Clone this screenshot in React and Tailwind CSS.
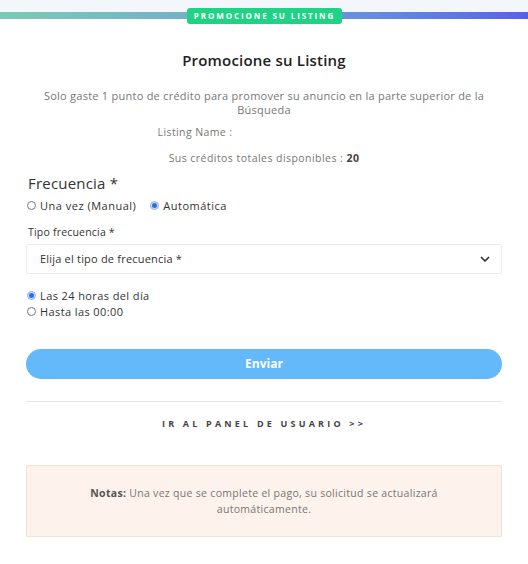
import React, { useState } from 'react';

const Radio = ({ checked, label, onClick }) => (
    <label onClick={onClick} className="flex items-center gap-[4px] cursor-pointer">
        <span className={`w-[9px] h-[9px] rounded-full flex items-center justify-center ${checked ? 'bg-[#c9defc] border border-[#8fb4f4]' : 'border border-[#777]'}`}>
            {checked && <span className="w-[5px] h-[5px] rounded-full bg-[#2f6fe6]" />}
        </span>
        <span>{label}</span>
    </label>
);

const App = () => {
    const [mode, setMode] = useState('auto');
    const [hours, setHours] = useState('24');

    return (
        <div className="w-[528px] min-h-[564px] bg-white text-[#333]" style={{ fontFamily: '"Open Sans", "Liberation Sans", sans-serif' }}>
            {/* cabecera */}
            <div className="relative h-[28px]">
                <div className="h-[12px] bg-[#f3f6fb]" />
                <div className="h-[7px] bg-gradient-to-r from-[#7acbb3] via-[#72a6d0] to-[#5a5ef0]" />
                <div className="absolute left-[187px] top-[8px] w-[155px] h-[16px] rounded-[3px] bg-[#1fd286] flex items-center justify-center text-white text-[8px] font-bold tracking-[1.9px]">
                    PROMOCIONE SU LISTING
                </div>
            </div>

            <div className="px-[26px]">
                <h1 className="mt-[21px] text-center text-[15px] font-semibold tracking-[0.2px] text-[#222]">Promocione su Listing</h1>
                <p className="mt-[17px] mx-auto max-w-[460px] text-center text-[11px] leading-[14px] tracking-[0.25px] text-[#777]">
                    Solo gaste 1 punto de crédito para promover su anuncio en la parte superior de la Búsqueda
                </p>
                <div className="mt-[8px] flex justify-center text-[10.5px] tracking-[0.4px] text-[#777]">
                    <span>Listing Name :</span>
                    <span className="w-[138px]" />
                </div>
                <p className="mt-[11px] text-center text-[10.5px] tracking-[0.45px] text-[#777]">
                    Sus créditos totales disponibles : <b className="text-[#444]">20</b>
                </p>

                <div className="mt-[5px] pl-[2px] text-[15px] tracking-[0.2px] text-[#333]">Frecuencia *</div>
                <div className="mt-[3px] pl-[1px] flex items-center gap-[14px] text-[11px] tracking-[0.5px] text-[#333]">
                    <Radio checked={mode === 'manual'} label="Una vez (Manual)" onClick={() => setMode('manual')} />
                    <Radio checked={mode === 'auto'} label="Automática" onClick={() => setMode('auto')} />
                </div>

                <div className="mt-[11px] pl-[2px] text-[10.5px] tracking-[0.2px] text-[#333]">Tipo frecuencia *</div>
                <div className="mt-[3px] h-[30px] border border-[#ececec] rounded-[2px] flex items-center text-[11px] tracking-[0.2px] text-[#333]">
                    <span className="flex-1 pl-[13px]">Elija el tipo de frecuencia *</span>
                    <svg className="mr-[10px]" width="12" height="12" viewBox="0 0 24 24" fill="none" stroke="#333" strokeWidth="3.5" strokeLinecap="round" strokeLinejoin="round">
                        <path d="M5 9l7 7 7-7" />
                    </svg>
                </div>

                <div className="mt-[14px] pl-[1px] flex flex-col leading-[16px] text-[11px] tracking-[0.4px] text-[#333]">
                    <Radio checked={hours === '24'} label="Las 24 horas del día" onClick={() => setHours('24')} />
                    <Radio checked={hours === '00'} label="Hasta las 00:00" onClick={() => setHours('00')} />
                </div>

                <button className="mt-[29px] w-full h-[30px] rounded-full bg-[#64b9fb] text-white text-[12px] font-bold">
                    Enviar
                </button>

                <div className="mt-[22px] border-t border-[#e5e5e5]" />

                <div className="mt-[15px] text-center text-[9px] font-bold tracking-[3.2px] text-[#444]">
                    IR AL PANEL DE USUARIO &gt;&gt;
                </div>

                <div className="mt-[35px] h-[72px] bg-[#fdf2ec] border border-[#f5e2d8] flex items-center justify-center px-[40px] text-center text-[10.5px] leading-[16px] tracking-[0.3px] text-[#777]">
                    <p><b className="text-[#555]">Notas:</b> Una vez que se complete el pago, su solicitud se actualizará automáticamente.</p>
                </div>
            </div>
        </div>
    );
};

export default App;
